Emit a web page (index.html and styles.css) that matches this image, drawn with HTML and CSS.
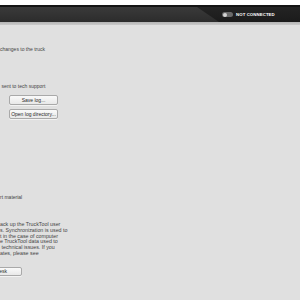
FILE: index.html
```html
<!DOCTYPE html>
<html lang="en">
<head>
    <meta charset="UTF-8">
    <meta name="viewport" content="width=device-width, initial-scale=1.0">
    <title>TruckTool - Settings</title>
    <link rel="stylesheet" href="styles.css">
</head>
<body>
    <div class="topline"></div>

    <div class="titlebar">
        <div class="titlebar-fill"></div>
        <div class="status">
            <span class="toggle"><span class="knob"></span></span>
            <span class="status-text">NOT CONNECTED</span>
        </div>
    </div>
    <div class="rule"></div>

    <div class="main">
        <p class="line first">changes to the truck</p>

        <p class="line support"> sent to tech support</p>
        <button class="btn wide">Save log...</button>
        <button class="btn wide second">Open log directory...</button>

        <p class="line material">rt material</p>

        <p class="para">ack up the TruckTool user<br>s. Synchronization is used to<br>t in the case of computer<br>e TruckTool data used to<br>&nbsp;technical issues. If you<br>ates, please see</p>
        <button class="btn cut">Open desk</button>
    </div>
</body>
</html>
```

FILE: styles.css
```css
body {
    margin: 0;
    width: 300px;
    height: 300px;
    overflow: hidden;
    background-color: #e0e0e0;
    font-family: 'Liberation Sans', Arial, sans-serif;
    font-size: 5px;
    color: #444;
}

.topline {
    height: 5px;
    background-color: #fff;
}

.titlebar {
    display: flex;
    height: 15px;
    border-top: 2px solid #141414;
    background: linear-gradient(#3a3a3a, #2c2c2c);
}

.titlebar-fill {
    flex: 1;
}

.status {
    display: flex;
    align-items: center;
    gap: 3px;
    width: 103px;
    padding-left: 25px;
    box-sizing: border-box;
    background: linear-gradient(#242424, #1b1b1b);
    clip-path: polygon(0 0, 100% 0, 100% 100%, 22px 100%);
}

.toggle {
    display: flex;
    align-items: center;
    width: 11px;
    height: 5px;
    border-radius: 3px;
    background-color: #6a6a6a;
    padding: 0 1px;
    box-sizing: border-box;
}

.knob {
    width: 4px;
    height: 4px;
    border-radius: 50%;
    background-color: #d4d4d4;
}

.status-text {
    color: #fff;
    font-weight: bold;
    font-size: 4.3px;
    letter-spacing: 0.1px;
}

.rule {
    height: 3px;
    background: linear-gradient(#b4b4b4, #cacaca);
}

.main {
    display: flex;
    flex-direction: column;
    align-items: flex-start;
    padding-top: 21px;
}

.line {
    margin: 0;
    line-height: 6px;
    white-space: pre;
}

.support {
    margin-top: 31px;
}

.material {
    margin-top: 75px;
}

.para {
    margin: 22px 0 0;
    line-height: 5.8px;
    font-size: 5.3px;
}

.btn {
    font-family: 'Liberation Sans', Arial, sans-serif;
    font-size: 5px;
    color: #2a2a2a;
    height: 10px;
    padding: 0;
    border: 1px solid #a9a9a9;
    border-radius: 2px;
    background: linear-gradient(#fafafa, #e8e8e8);
    box-shadow: 0 1px 0 rgba(255, 255, 255, 0.6);
}

.wide {
    width: 49px;
    margin: 6px 0 0 9px;
}

.wide.second {
    margin-top: 4px;
}

.cut {
    width: 54px;
    height: 9px;
    margin: 10px 0 0 -32px;
}
```
